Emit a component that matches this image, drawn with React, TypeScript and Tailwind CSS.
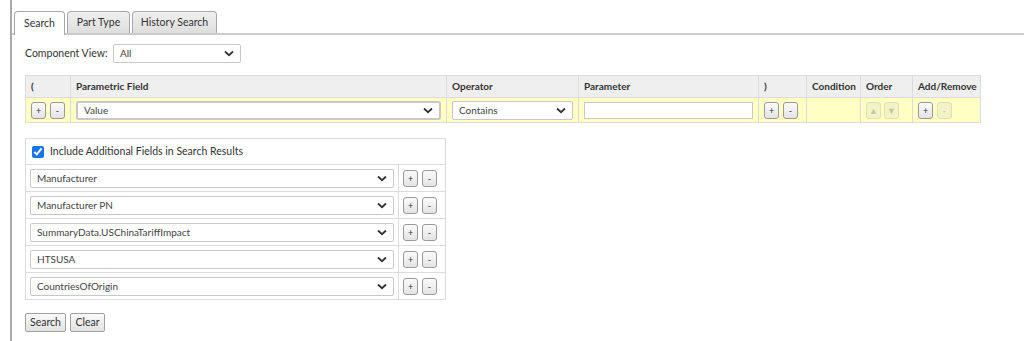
import { useState } from 'react';

const font = { fontFamily: 'Lato, "Liberation Sans", sans-serif' };

function SmallBtn({ label, disabled }: { label: string; disabled?: boolean }) {
  return (
    <button
      className={
        'w-[15px] h-[17px] rounded-[3px] border text-[9px] leading-none flex items-center justify-center ' +
        (disabled
          ? 'border-[#e0e0b0] bg-[#f3f3c8] text-[#c8c8a0]'
          : 'border-[#9a9a9a] bg-gradient-to-b from-[#fbfbfb] to-[#e4e4e4] text-[#333]')
      }
    >
      {label}
    </button>
  );
}

function Chevron() {
  return (
    <svg width="10" height="7" viewBox="0 0 10 7" className="shrink-0">
      <path d="M1 1.5 L5 5.2 L9 1.5" fill="none" stroke="#333" strokeWidth="1.8" />
    </svg>
  );
}

function FakeSelect({ value, className }: { value: string; className: string }) {
  return (
    <div
      className={
        'flex items-center justify-between bg-white border border-[#c8c8c8] rounded-[2px] pl-[6px] pr-[6px] text-[10px] text-[#444] ' +
        className
      }
    >
      <span className="whitespace-nowrap">{value}</span>
      <Chevron />
    </div>
  );
}

export default function App() {
  const [checked, setChecked] = useState(true);
  const fields = ['Manufacturer', 'Manufacturer PN', 'SummaryData.USChinaTariffImpact', 'HTSUSA', 'CountriesOfOrigin'];
  const th = 'border border-[#dcdcdc] bg-[#efefef] text-left font-bold text-[10px] text-[#333] px-[5px] h-[22px] whitespace-nowrap';
  const td = 'border border-[#dcdcdc] bg-[#ffffc4] px-[5px] h-[25px]';

  return (
    <div className="w-[1024px] h-[341px] bg-white flex overflow-hidden" style={font}>
      <div className="w-[10px] shrink-0" />
      <div className="flex-1 border-l-2 border-[#a9a9a9] flex flex-col">
        <div className="flex items-end pl-[2px] pt-[10px] border-b-2 border-[#cccccc] h-[35px]">
          <div className="h-[24px] w-[51px] mb-[-2px] border border-b-0 border-[#a8a8a8] rounded-t-[4px] bg-white flex items-center justify-center text-[10.5px] text-[#333]">
            Search
          </div>
          <div className="h-[22px] w-[63px] ml-[2px] border border-b-0 border-[#a8a8a8] rounded-t-[4px] bg-gradient-to-b from-[#f0f0f0] to-[#dedede] flex items-center justify-center text-[10.5px] text-[#333]">
            Part Type
          </div>
          <div className="h-[22px] w-[85px] ml-[2px] border border-b-0 border-[#a8a8a8] rounded-t-[4px] bg-gradient-to-b from-[#f0f0f0] to-[#dedede] flex items-center justify-center text-[10.5px] text-[#333]">
            History Search
          </div>
        </div>

        <div className="pl-[13px] flex flex-col">
          <div className="flex items-center mt-[9px] h-[19px]">
            <span className="text-[10.5px] text-[#333] w-[88px] whitespace-nowrap">Component View:</span>
            <FakeSelect value="All" className="w-[128px] h-[19px]" />
          </div>

          <table className="mt-[12px] border-collapse table-fixed w-[956px]">
            <colgroup>
              <col className="w-[45px]" />
              <col className="w-[376px]" />
              <col className="w-[132px]" />
              <col className="w-[180px]" />
              <col className="w-[48px]" />
              <col className="w-[54px]" />
              <col className="w-[52px]" />
              <col />
            </colgroup>
            <thead>
              <tr>
                <th className={th}>(</th>
                <th className={th}>Parametric Field</th>
                <th className={th}>Operator</th>
                <th className={th}>Parameter</th>
                <th className={th}>)</th>
                <th className={th}>Condition</th>
                <th className={th}>Order</th>
                <th className={th}>Add/Remove</th>
              </tr>
            </thead>
            <tbody>
              <tr>
                <td className={td}>
                  <div className="flex gap-[4px]">
                    <SmallBtn label="+" />
                    <SmallBtn label="-" />
                  </div>
                </td>
                <td className={td}>
                  <FakeSelect value="Value" className="h-[19px] border-[#222] border-2 rounded-[3px]" />
                </td>
                <td className={td}>
                  <FakeSelect value="Contains" className="h-[19px]" />
                </td>
                <td className={td}>
                  <input className="w-full h-[17px] bg-white border border-[#c8c8c8] outline-none" />
                </td>
                <td className={td}>
                  <div className="flex gap-[4px]">
                    <SmallBtn label="+" />
                    <SmallBtn label="-" />
                  </div>
                </td>
                <td className={td}></td>
                <td className={td}>
                  <div className="flex gap-[3px]">
                    <SmallBtn label="▲" disabled />
                    <SmallBtn label="▼" disabled />
                  </div>
                </td>
                <td className={td}>
                  <div className="flex gap-[4px]">
                    <SmallBtn label="+" />
                    <SmallBtn label="-" disabled />
                  </div>
                </td>
              </tr>
            </tbody>
          </table>

          <table className="mt-[15px] border-collapse table-fixed w-[421px]">
            <colgroup>
              <col className="w-[373px]" />
              <col />
            </colgroup>
            <tbody>
              <tr>
                <td colSpan={2} className="border border-[#dcdcdc] h-[26px] px-[6px]">
                  <label className="flex items-center gap-[6px] text-[10.5px] text-[#333]">
                    <input
                      type="checkbox"
                      checked={checked}
                      onChange={() => setChecked(!checked)}
                      className="w-[12px] h-[12px] accent-[#1a73e8]"
                    />
                    Include Additional Fields in Search Results
                  </label>
                </td>
              </tr>
              {fields.map(f => (
                <tr key={f}>
                  <td className="border border-[#dcdcdc] h-[27px] px-[4px]">
                    <FakeSelect value={f} className="h-[19px]" />
                  </td>
                  <td className="border border-[#dcdcdc] px-[4px]">
                    <div className="flex gap-[4px]">
                      <SmallBtn label="+" />
                      <SmallBtn label="-" />
                    </div>
                  </td>
                </tr>
              ))}
            </tbody>
          </table>

          <div className="flex gap-[4px] mt-[13px]">
            <button className="h-[19px] w-[41px] border border-[#a0a0a0] rounded-[2px] bg-gradient-to-b from-[#fafafa] to-[#e2e2e2] text-[10.5px] text-[#333]">
              Search
            </button>
            <button className="h-[19px] w-[35px] border border-[#a0a0a0] rounded-[2px] bg-gradient-to-b from-[#fafafa] to-[#e2e2e2] text-[10.5px] text-[#333]">
              Clear
            </button>
          </div>
        </div>
      </div>
    </div>
  );
}
